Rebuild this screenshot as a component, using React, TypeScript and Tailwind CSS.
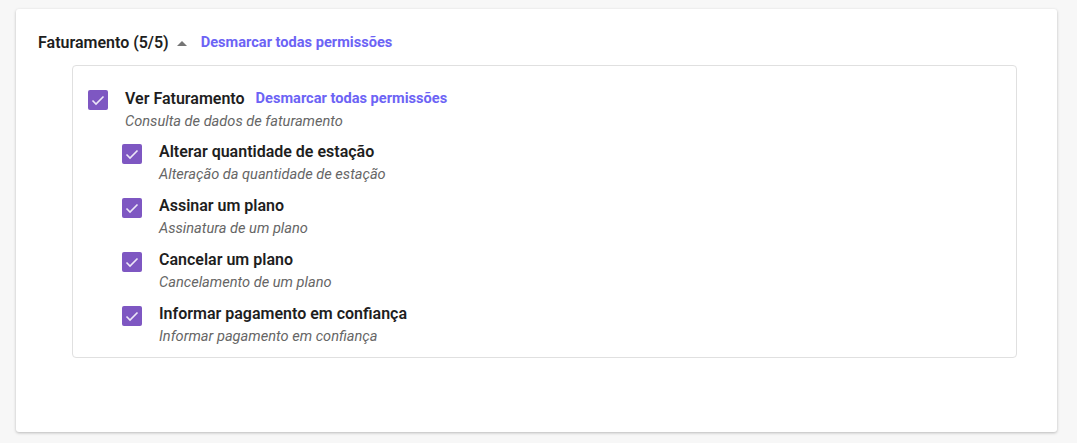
const items = [
  { title: "Alterar quantidade de estação", desc: "Alteração da quantidade de estação" },
  { title: "Assinar um plano", desc: "Assinatura de um plano" },
  { title: "Cancelar um plano", desc: "Cancelamento de um plano" },
  { title: "Informar pagamento em confiança", desc: "Informar pagamento em confiança" },
];

const Check = () => (
  <div className="w-5 h-5 rounded-[2px] bg-[#7e57c2] flex items-center justify-center shrink-0">
    <svg width="20" height="20" viewBox="0 0 20 20" fill="none">
      <path d="M4.5 10.5l3.5 3.5L15.5 6.5" stroke="#ece6f7" strokeWidth="1.6" />
    </svg>
  </div>
);

const LinkText = ({ className = "" }: { className?: string }) => (
  <span className={`text-[14.6px] font-bold text-[#6c63f5] ${className}`}>Desmarcar todas permissões</span>
);

const App = () => {
  return (
    <div className="min-h-[443px] bg-[#f7f7f7] pl-4 pr-5 pt-[9px] font-['Roboto',sans-serif]">
      <div className="bg-white h-[423px] rounded-[3px] shadow-[0_1px_3px_rgba(0,0,0,0.25)] pl-[22px] pr-[40px] pt-[26px]">
        <div className="flex items-center h-[16px]">
          <span className="text-[16px] font-semibold text-[#1e1e1e]">Faturamento (5/5)</span>
          <span className="ml-[8px] w-0 h-0 border-l-[5px] border-r-[5px] border-b-[5px] border-l-transparent border-r-transparent border-b-[#757575]" />
          <LinkText className="ml-[14px]" />
        </div>
        <div className="ml-[34px] mt-[14px] border border-[#e0e0e0] rounded-[4px] pl-[15px] pt-[24px] pb-[11px]">
          <div className="flex gap-[17px]">
            <Check />
            <div className="-mt-[1px]">
              <div className="flex items-center gap-[11px] h-[20px]">
                <span className="text-[16px] font-semibold text-[#1e1e1e]">Ver Faturamento</span>
                <LinkText />
              </div>
              <div className="text-[14.6px] italic text-[#666666] mt-[2px] leading-[20px]">Consulta de dados de faturamento</div>
            </div>
          </div>
          <div className="pl-[34px] mt-[13px] flex flex-col gap-[14px]">
            {items.map((it) => (
              <div key={it.title} className="flex gap-[17px]">
                <Check />
                <div className="-mt-[2px]">
                  <div className="text-[16px] font-semibold text-[#1e1e1e] h-[20px] leading-[20px]">{it.title}</div>
                  <div className="text-[14.6px] italic text-[#666666] mt-[2px] leading-[20px]">{it.desc}</div>
                </div>
              </div>
            ))}
          </div>
        </div>
      </div>
    </div>
  );
};

export default App;
